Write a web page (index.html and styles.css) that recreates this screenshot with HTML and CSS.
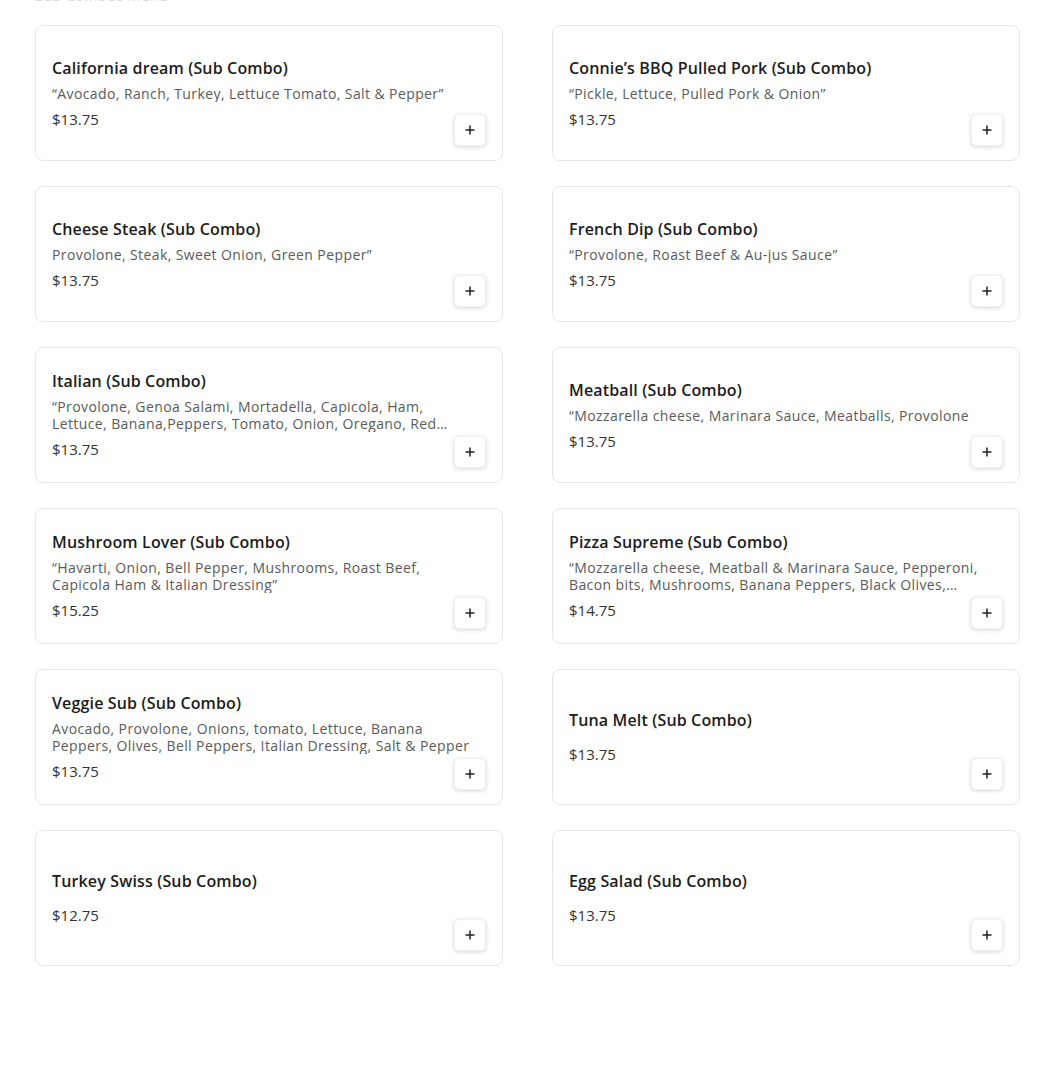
FILE: index.html
```html
<!DOCTYPE html>
<html lang="en">
<head>
    <meta charset="UTF-8">
    <meta name="viewport" content="width=device-width, initial-scale=1.0">
    <title>Sub Combos</title>
    <link rel="stylesheet" href="styles.css">
</head>
<body>
    <div class="menu">
        <h2 class="section-title">Sub Combos menu</h2>

        <div class="item-grid">
            <div class="item-card">
                <div class="item-info">
                    <div class="item-name">California dream (Sub Combo)</div>
                    <div class="item-desc">“Avocado, Ranch, Turkey, Lettuce Tomato, Salt &amp; Pepper”</div>
                    <div class="item-price">$13.75</div>
                </div>
                <button class="add-btn" aria-label="Add"><svg viewBox="0 0 12 12" width="12" height="12"><path d="M6 1.5v9M1.5 6h9" /></svg></button>
            </div>

            <div class="item-card">
                <div class="item-info">
                    <div class="item-name">Connie’s BBQ Pulled Pork (Sub Combo)</div>
                    <div class="item-desc">“Pickle, Lettuce, Pulled Pork &amp; Onion”</div>
                    <div class="item-price">$13.75</div>
                </div>
                <button class="add-btn" aria-label="Add"><svg viewBox="0 0 12 12" width="12" height="12"><path d="M6 1.5v9M1.5 6h9" /></svg></button>
            </div>

            <div class="item-card">
                <div class="item-info">
                    <div class="item-name">Cheese Steak (Sub Combo)</div>
                    <div class="item-desc">Provolone, Steak, Sweet Onion, Green Pepper”</div>
                    <div class="item-price">$13.75</div>
                </div>
                <button class="add-btn" aria-label="Add"><svg viewBox="0 0 12 12" width="12" height="12"><path d="M6 1.5v9M1.5 6h9" /></svg></button>
            </div>

            <div class="item-card">
                <div class="item-info">
                    <div class="item-name">French Dip (Sub Combo)</div>
                    <div class="item-desc">“Provolone, Roast Beef &amp; Au-jus Sauce”</div>
                    <div class="item-price">$13.75</div>
                </div>
                <button class="add-btn" aria-label="Add"><svg viewBox="0 0 12 12" width="12" height="12"><path d="M6 1.5v9M1.5 6h9" /></svg></button>
            </div>

            <div class="item-card">
                <div class="item-info">
                    <div class="item-name">Italian (Sub Combo)</div>
                    <div class="item-desc">“Provolone, Genoa Salami, Mortadella, Capicola, Ham, Lettuce, Banana,Peppers, Tomato, Onion, Oregano, Red Onion, Olive Oil &amp; Vinegar”</div>
                    <div class="item-price">$13.75</div>
                </div>
                <button class="add-btn" aria-label="Add"><svg viewBox="0 0 12 12" width="12" height="12"><path d="M6 1.5v9M1.5 6h9" /></svg></button>
            </div>

            <div class="item-card">
                <div class="item-info">
                    <div class="item-name">Meatball (Sub Combo)</div>
                    <div class="item-desc">“Mozzarella cheese, Marinara Sauce, Meatballs, Provolone</div>
                    <div class="item-price">$13.75</div>
                </div>
                <button class="add-btn" aria-label="Add"><svg viewBox="0 0 12 12" width="12" height="12"><path d="M6 1.5v9M1.5 6h9" /></svg></button>
            </div>

            <div class="item-card">
                <div class="item-info">
                    <div class="item-name">Mushroom Lover (Sub Combo)</div>
                    <div class="item-desc">“Havarti, Onion, Bell Pepper, Mushrooms, Roast Beef, Capicola Ham &amp; Italian Dressing”</div>
                    <div class="item-price">$15.25</div>
                </div>
                <button class="add-btn" aria-label="Add"><svg viewBox="0 0 12 12" width="12" height="12"><path d="M6 1.5v9M1.5 6h9" /></svg></button>
            </div>

            <div class="item-card">
                <div class="item-info">
                    <div class="item-name">Pizza Supreme (Sub Combo)</div>
                    <div class="item-desc">“Mozzarella cheese, Meatball &amp; Marinara Sauce, Pepperoni, Bacon bits, Mushrooms, Banana Peppers, Black Olives, Green Peppers &amp; Onion”</div>
                    <div class="item-price">$14.75</div>
                </div>
                <button class="add-btn" aria-label="Add"><svg viewBox="0 0 12 12" width="12" height="12"><path d="M6 1.5v9M1.5 6h9" /></svg></button>
            </div>

            <div class="item-card">
                <div class="item-info">
                    <div class="item-name">Veggie Sub (Sub Combo)</div>
                    <div class="item-desc">Avocado, Provolone, Onions, tomato, Lettuce, Banana Peppers, Olives, Bell Peppers, Italian Dressing, Salt &amp; Pepper</div>
                    <div class="item-price">$13.75</div>
                </div>
                <button class="add-btn" aria-label="Add"><svg viewBox="0 0 12 12" width="12" height="12"><path d="M6 1.5v9M1.5 6h9" /></svg></button>
            </div>

            <div class="item-card">
                <div class="item-info">
                    <div class="item-name">Tuna Melt (Sub Combo)</div>
                    <div class="item-desc"></div>
                    <div class="item-price">$13.75</div>
                </div>
                <button class="add-btn" aria-label="Add"><svg viewBox="0 0 12 12" width="12" height="12"><path d="M6 1.5v9M1.5 6h9" /></svg></button>
            </div>

            <div class="item-card">
                <div class="item-info">
                    <div class="item-name">Turkey Swiss (Sub Combo)</div>
                    <div class="item-desc"></div>
                    <div class="item-price">$12.75</div>
                </div>
                <button class="add-btn" aria-label="Add"><svg viewBox="0 0 12 12" width="12" height="12"><path d="M6 1.5v9M1.5 6h9" /></svg></button>
            </div>

            <div class="item-card">
                <div class="item-info">
                    <div class="item-name">Egg Salad (Sub Combo)</div>
                    <div class="item-desc"></div>
                    <div class="item-price">$13.75</div>
                </div>
                <button class="add-btn" aria-label="Add"><svg viewBox="0 0 12 12" width="12" height="12"><path d="M6 1.5v9M1.5 6h9" /></svg></button>
            </div>
        </div>
    </div>
</body>
</html>
```

FILE: styles.css
```css
body {
    margin: 0;
    font-family: 'Open Sans', 'Liberation Sans', sans-serif;
    background-color: #fff;
    color: #222;
}

.menu {
    padding: 0 30px 0 35px;
}

.section-title {
    margin: -13px 0 22px;
    font-size: 15px;
    font-weight: 400;
    line-height: 16px;
    color: #dadada;
}

.item-grid {
    display: grid;
    grid-template-columns: 468px 468px;
    column-gap: 49px;
    row-gap: 25px;
}

.item-card {
    display: grid;
    grid-template: 1fr / 1fr;
    height: 136px;
    box-sizing: border-box;
    padding: 16px;
    border: 1px solid #e7e7e7;
    border-radius: 8px;
    background-color: #fff;
}

.item-info {
    grid-area: 1 / 1;
    align-self: center;
    display: flex;
    flex-direction: column;
    gap: 6px;
    padding-right: 16px;
}

.item-name {
    font-size: 16px;
    font-weight: 600;
    line-height: 22px;
    color: #1c1c1c;
    letter-spacing: 0.15px;
}

.item-desc {
    font-size: 14px;
    line-height: 17px;
    letter-spacing: 0.4px;
    color: #5a5a5a;
    display: -webkit-box;
    -webkit-line-clamp: 2;
    -webkit-box-orient: vertical;
    overflow: hidden;
}

.item-price {
    font-size: 15px;
    line-height: 22px;
    color: #333;
}

.add-btn {
    grid-area: 1 / 1;
    align-self: end;
    justify-self: end;
    width: 32px;
    height: 32px;
    margin-bottom: -2px;
    padding: 0;
    display: flex;
    align-items: center;
    justify-content: center;
    border: 1px solid #f0f0f0;
    border-radius: 5px;
    background-color: #fff;
    box-shadow: 0 1px 4px rgba(0, 0, 0, 0.16);
    cursor: pointer;
}

.add-btn svg {
    stroke: #222;
    stroke-width: 1.5;
    fill: none;
}
```
